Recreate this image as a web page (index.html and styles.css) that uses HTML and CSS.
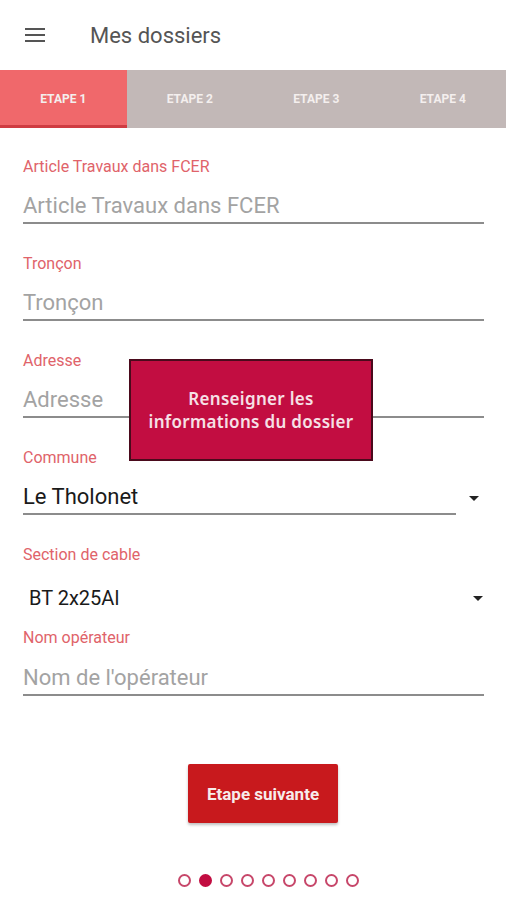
FILE: index.html
```html
<!DOCTYPE html>
<html lang="fr">
<head>
    <meta charset="UTF-8">
    <meta name="viewport" content="width=device-width, initial-scale=1.0">
    <title>Mes dossiers</title>
    <link rel="stylesheet" href="styles.css">
</head>
<body>
    <div id="app">
        <div id="topBar">
            <svg class="menuIcon" width="20" height="14" viewBox="0 0 20 14">
                <rect x="0" y="0" width="20" height="2" fill="#555"/>
                <rect x="0" y="6" width="20" height="2" fill="#555"/>
                <rect x="0" y="12" width="20" height="2" fill="#555"/>
            </svg>
            <h1>Mes dossiers</h1>
        </div>

        <div id="tabs">
            <div class="tab active">ETAPE 1</div>
            <div class="tab">ETAPE 2</div>
            <div class="tab">ETAPE 3</div>
            <div class="tab">ETAPE 4</div>
        </div>

        <div id="form">
            <div class="field">
                <label>Article Travaux dans FCER</label>
                <div class="input placeholder">Article Travaux dans FCER</div>
            </div>
            <div class="field">
                <label>Tronçon</label>
                <div class="input placeholder">Tronçon</div>
            </div>
            <div class="field">
                <label>Adresse</label>
                <div class="input placeholder">Adresse</div>
            </div>
            <div class="field">
                <label>Commune</label>
                <div class="selectRow">
                    <div class="input value">Le Tholonet</div>
                    <span class="arrow"></span>
                </div>
            </div>
            <div class="field cable">
                <label>Section de cable</label>
                <div class="selectRow plain">
                    <div class="cableValue">BT 2x25Al</div>
                    <span class="arrow"></span>
                </div>
            </div>
            <div class="field operator">
                <label>Nom opérateur</label>
                <div class="input placeholder">Nom de l'opérateur</div>
            </div>

            <div id="tooltip">Renseigner les<br>informations du dossier</div>
        </div>

        <div id="buttonBox">
            <button>Etape suivante</button>
        </div>

        <div id="dots">
            <span class="dot"></span>
            <span class="dot on"></span>
            <span class="dot"></span>
            <span class="dot"></span>
            <span class="dot"></span>
            <span class="dot"></span>
            <span class="dot"></span>
            <span class="dot"></span>
            <span class="dot"></span>
        </div>
    </div>
</body>
</html>
```

FILE: styles.css
```css
body {
    margin: 0;
    font-family: Roboto, "Liberation Sans", sans-serif;
    background-color: #ffffff;
}
#app {
    width: 506px;
    height: 900px;
    overflow: hidden;
}
#topBar {
    display: flex;
    align-items: center;
    height: 70px;
    padding-left: 25px;
}
.menuIcon {
    display: block;
}
#topBar h1 {
    margin: 0 0 0 45px;
    font-size: 22px;
    font-weight: 400;
    color: #555555;
}
#tabs {
    display: flex;
    height: 58px;
    background-color: #c2b8b7;
}
.tab {
    flex: 1;
    display: flex;
    align-items: center;
    justify-content: center;
    color: #f4efee;
    font-size: 12px;
    font-weight: 700;
    box-sizing: border-box;
}
.tab.active {
    background-color: #f0686b;
    border-bottom: 3px solid #cf3c42;
    padding-top: 3px;
}
#form {
    position: relative;
    padding: 30px 22px 0 23px;
}
.field {
    margin-bottom: 31px;
}
.field label {
    display: block;
    font-size: 16px;
    color: #e0636a;
    line-height: 18px;
}
.input {
    font-size: 22px;
    line-height: 26px;
    padding-top: 17px;
    padding-bottom: 3px;
    border-bottom: 2px solid #8c8c8c;
}
.placeholder {
    color: #a3a3a3;
}
.value {
    color: #1a1a1a;
}
.selectRow {
    display: flex;
    align-items: center;
}
.selectRow .input {
    flex: 1;
    margin-right: 13px;
}
.arrow {
    width: 0;
    height: 0;
    margin-right: 5px;
    margin-top: 14px;
    border-left: 5px solid transparent;
    border-right: 5px solid transparent;
    border-top: 5px solid #222;
}
.field.cable {
    margin-bottom: 20px;
}
.selectRow.plain {
    padding-top: 23px;
}
.selectRow.plain .arrow {
    margin-top: 0;
    margin-right: 1px;
}
.cableValue {
    flex: 1;
    font-size: 20px;
    line-height: 22px;
    color: #1a1a1a;
    padding-left: 6px;
}
.field.operator .input {
    padding-top: 18px;
}
#tooltip {
    position: absolute;
    left: 129px;
    top: 231px;
    width: 240px;
    height: 98px;
    display: flex;
    align-items: center;
    justify-content: center;
    text-align: center;
    background-color: #c20d41;
    border: 2px solid #4a0a1c;
    color: #f6e0e6;
    font-family: "Noto Sans", sans-serif;
    font-size: 17px;
    font-weight: 600;
    line-height: 23px;
    letter-spacing: 0.3px;
}
#buttonBox {
    display: flex;
    justify-content: center;
    padding-top: 37px;
    padding-left: 20px;
}
#buttonBox button {
    width: 150px;
    height: 59px;
    border: none;
    border-radius: 2px;
    background-color: #c8191d;
    color: #f7eceb;
    font-family: Roboto, "Liberation Sans", sans-serif;
    font-size: 17px;
    font-weight: 700;
    box-shadow: 0 2px 3px rgba(0, 0, 0, 0.25);
}
#dots {
    display: flex;
    gap: 8px;
    padding-top: 51px;
    padding-left: 178px;
}
.dot {
    box-sizing: border-box;
    width: 13px;
    height: 13px;
    border: 2px solid #c7476a;
    border-radius: 50%;
}
.dot.on {
    background-color: #c20d41;
    border-color: #c20d41;
}
```
